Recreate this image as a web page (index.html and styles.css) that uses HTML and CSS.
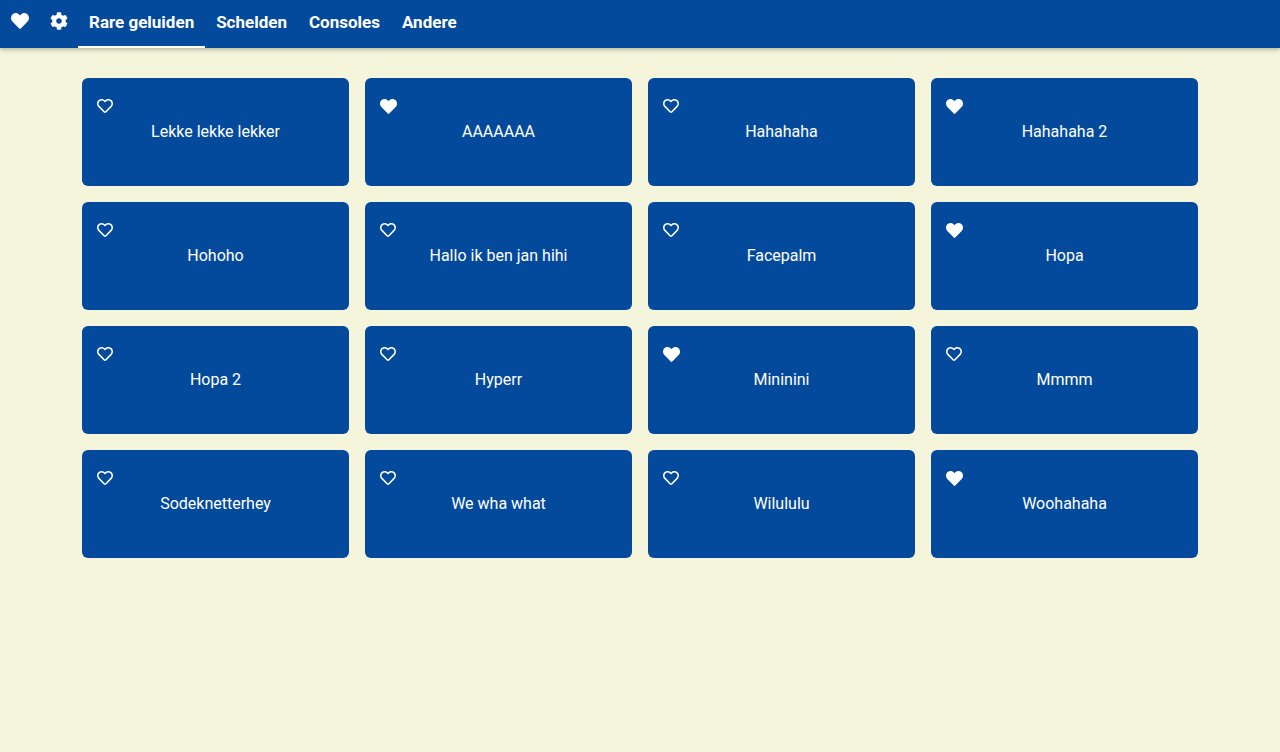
FILE: index.html
```html
<!DOCTYPE html>
<html lang="nl">
<head>
<meta charset="utf-8">
<title>Soundboard</title>
<link rel="stylesheet" href="styles.css">
</head>
<body>
<svg class="defs" width="0" height="0" aria-hidden="true">
  <defs>
    <symbol id="solid" viewBox="0 0 512 512"><path d="M462.3 62.6C407.5 15.9 326 24.3 275.7 76.2L256 96.5l-19.7-20.3C186.1 24.3 104.5 15.9 49.7 62.6c-62.8 53.6-66.1 149.8-9.9 207.9l193.5 199.8c12.5 12.9 32.8 12.9 45.3 0l193.5-199.8c56.3-58.1 53-154.3-9.8-207.9z"/></symbol>
    <symbol id="outline" viewBox="0 0 512 512"><path d="M458.4 64.3C400.6 15.7 311.3 23 256 79.3 200.7 23 111.4 15.6 53.6 64.3-21.6 127.6-10.6 230.8 43 285.5l175.4 178.7c10 10.2 23.4 15.9 37.6 15.9 14.3 0 27.6-5.6 37.6-15.8L469 285.6c53.5-54.7 64.7-157.9-10.6-221.3zm-23.6 187.5L259.4 430.5c-2.4 2.4-4.4 2.4-6.8 0L77.2 251.8c-36.5-37.2-43.9-107.6 7.3-150.7 38.9-32.7 98.9-27.8 136.5 10.5l35 35.7 35-35.7c37.8-38.5 97.8-43.2 136.5-10.6 51.1 43.1 43.5 113.9 7.3 150.8z"/></symbol>
    <symbol id="gear" viewBox="0 0 512 512"><path d="M487.4 315.7l-42.6-24.6c4.3-23.2 4.3-47 0-70.2l42.6-24.6c4.9-2.8 7.1-8.6 5.5-14-11.1-35.6-30-67.8-54.7-94.6-3.8-4.1-10-5.1-14.8-2.3L380.8 110c-17.9-15.4-38.5-27.3-60.8-35.1V25.8c0-5.6-3.9-10.5-9.4-11.7-36.7-8.2-74.3-7.8-109.2 0-5.5 1.2-9.4 6.1-9.4 11.7V75c-22.2 7.9-42.8 19.8-60.8 35.1L88.7 85.5c-4.9-2.8-11-1.9-14.8 2.3-24.7 26.7-43.6 58.9-54.7 94.6-1.7 5.4.6 11.2 5.5 14L67.3 221c-4.3 23.2-4.3 47 0 70.2l-42.6 24.6c-4.9 2.8-7.1 8.6-5.5 14 11.1 35.6 30 67.8 54.7 94.6 3.8 4.1 10 5.1 14.8 2.3l42.6-24.6c17.9 15.4 38.5 27.3 60.8 35.1v49.2c0 5.6 3.9 10.5 9.4 11.7 36.7 8.2 74.3 7.8 109.2 0 5.5-1.2 9.4-6.1 9.4-11.7v-49.2c22.2-7.9 42.8-19.8 60.8-35.1l42.6 24.6c4.9 2.8 11 1.9 14.8-2.3 24.7-26.7 43.6-58.9 54.7-94.6 1.5-5.5-.7-11.3-5.6-14.1zM256 336c-44.1 0-80-35.9-80-80s35.9-80 80-80 80 35.9 80 80-35.9 80-80 80z"/></symbol>
  </defs>
</svg>
<nav class="topbar">
  <span class="nav-icon nav-heart"><svg class="ico-nav"><use href="#solid"/></svg></span>
  <span class="nav-icon nav-gear"><svg class="ico-gear"><use href="#gear"/></svg></span>
  <a class="tab active">Rare geluiden</a>
  <a class="tab">Schelden</a>
  <a class="tab">Consoles</a>
  <a class="tab">Andere</a>
</nav>
<main class="grid">
  <div class="card"><svg class="fav"><use href="#outline"/></svg><span class="label">Lekke lekke lekker</span></div>
  <div class="card"><svg class="fav on"><use href="#solid"/></svg><span class="label">AAAAAAA</span></div>
  <div class="card"><svg class="fav"><use href="#outline"/></svg><span class="label">Hahahaha</span></div>
  <div class="card"><svg class="fav on"><use href="#solid"/></svg><span class="label">Hahahaha 2</span></div>
  <div class="card"><svg class="fav"><use href="#outline"/></svg><span class="label">Hohoho</span></div>
  <div class="card"><svg class="fav"><use href="#outline"/></svg><span class="label">Hallo ik ben jan hihi</span></div>
  <div class="card"><svg class="fav"><use href="#outline"/></svg><span class="label">Facepalm</span></div>
  <div class="card"><svg class="fav on"><use href="#solid"/></svg><span class="label">Hopa</span></div>
  <div class="card"><svg class="fav"><use href="#outline"/></svg><span class="label">Hopa 2</span></div>
  <div class="card"><svg class="fav"><use href="#outline"/></svg><span class="label">Hyperr</span></div>
  <div class="card"><svg class="fav on"><use href="#solid"/></svg><span class="label">Mininini</span></div>
  <div class="card"><svg class="fav"><use href="#outline"/></svg><span class="label">Mmmm</span></div>
  <div class="card"><svg class="fav"><use href="#outline"/></svg><span class="label">Sodeknetterhey</span></div>
  <div class="card"><svg class="fav"><use href="#outline"/></svg><span class="label">We wha what</span></div>
  <div class="card"><svg class="fav"><use href="#outline"/></svg><span class="label">Wilululu</span></div>
  <div class="card"><svg class="fav on"><use href="#solid"/></svg><span class="label">Woohahaha</span></div>
</main>
</body>
</html>
```
FILE: styles.css
```css
* { box-sizing: border-box; }
html, body { height: 100%; }
body {
  margin: 0;
  background: #f5f5dc;
  font-family: Roboto, "Liberation Sans", sans-serif;
  color: #fff;
  overflow: hidden;
}
.defs { display: block; height: 0; }
svg { fill: #fff; display: block; }
.topbar {
  display: flex;
  align-items: stretch;
  height: 48px;
  background: #044a9c;
  box-shadow: 0 2px 4px rgba(0,0,0,.25);
}
.nav-icon { display: flex; align-items: center; justify-content: center; padding-bottom: 6px; }
.nav-heart { width: 39px; }
.nav-gear { width: 39px; }
.ico-nav { width: 18px; height: 18px; }
.ico-gear { width: 18px; height: 18px; }
.tab {
  display: flex;
  align-items: center;
  padding: 0 11px 2px;
  font-size: 17px;
  font-weight: 700;
  border-bottom: 2px solid transparent;
}
.tab.active { border-bottom-color: #fff; }
.grid {
  display: grid;
  grid-template-columns: repeat(4, 267px);
  grid-auto-rows: 108px;
  gap: 16px;
  justify-content: center;
  padding-top: 30px;
}
.card {
  position: relative;
  display: flex;
  justify-content: center;
  padding-top: 44px;
  background: #044a9c;
  border-radius: 6px;
  font-size: 16px;
  line-height: 19px;
}
.label { display: block; }
.fav { position: absolute; left: 15px; top: 20px; width: 16px; height: 16px; }
.fav.on { width: 17px; height: 17px; }
```
